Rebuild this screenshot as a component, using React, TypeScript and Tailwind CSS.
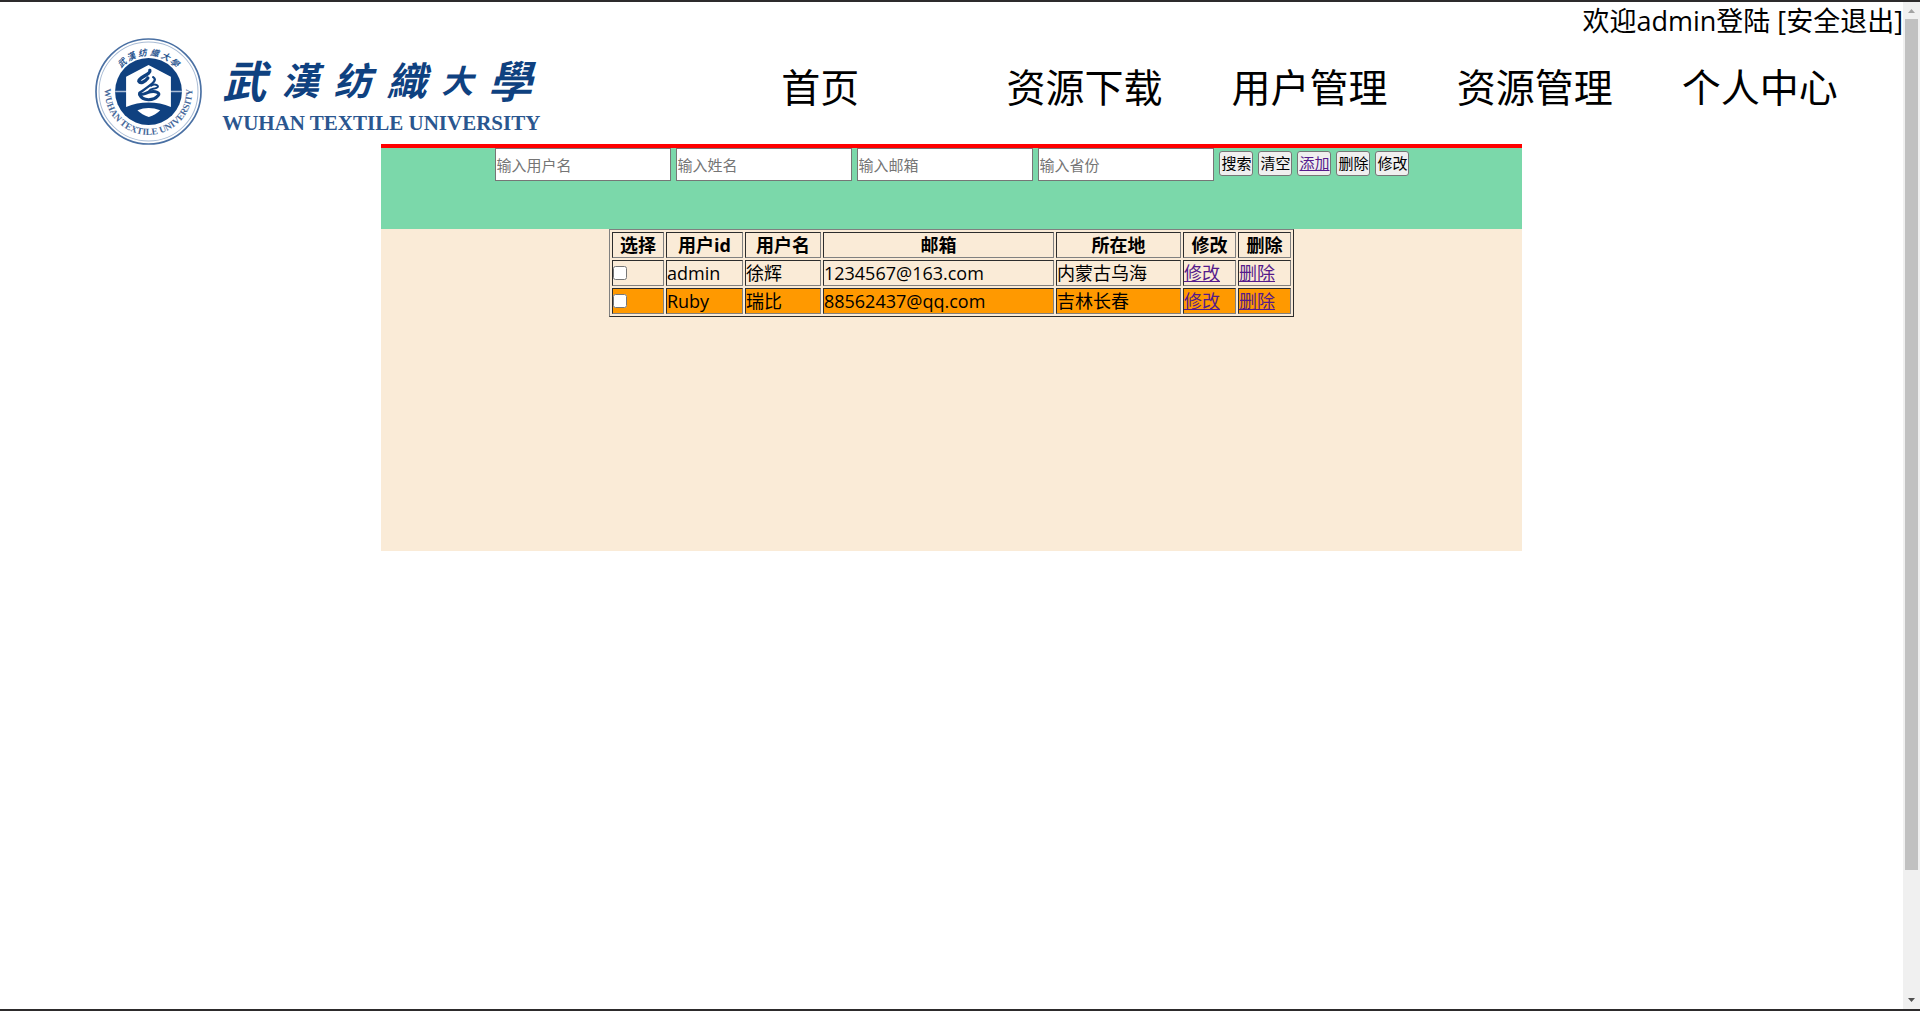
import React from "react";

const navItems = ["首页", "资源下载", "用户管理", "资源管理", "个人中心"];

const filters = ["输入用户名", "输入姓名", "输入邮箱", "输入省份"];

const users = [
  { id: "admin", name: "徐辉", email: "1234567@163.com", place: "内蒙古乌海" },
  { id: "Ruby", name: "瑞比", email: "88562437@qq.com", place: "吉林长春" },
];

const columns = [
  { label: "选择", width: "w-[52px]" },
  { label: "用户id", width: "w-[77px]" },
  { label: "用户名", width: "w-[76px]" },
  { label: "邮箱", width: "w-auto" },
  { label: "所在地", width: "w-[125px]" },
  { label: "修改", width: "w-[53px]" },
  { label: "删除", width: "w-[53px]" },
];

const cell =
  "h-[26px] p-0 border border-t-[#2c2c2c] border-l-[#2c2c2c] border-b-[#808080] border-r-[#808080] leading-none";

const buttonStyle =
  "mt-[3px] h-[25px] w-[34px] rounded-[3px] border border-[#767676] bg-[#efefef] text-center text-[15px] leading-none whitespace-nowrap";

const sealChars = [
  { ch: "武", a: -43 },
  { ch: "漢", a: -27 },
  { ch: "纺", a: -9 },
  { ch: "織", a: 9 },
  { ch: "大", a: 26 },
  { ch: "學", a: 42 },
];

const logoChars = [
  { ch: "武", size: "text-[44px]" },
  { ch: "漢", size: "text-[38px]" },
  { ch: "纺", size: "text-[38px]" },
  { ch: "織", size: "text-[40px]" },
  { ch: "大", size: "text-[32px]" },
  { ch: "學", size: "text-[44px]" },
];

function Seal() {
  return (
    <svg viewBox="0 0 320 320" className="size-[107px] shrink-0" aria-hidden="true">
      <defs>
        <path id="seal-arc" d="M31 136 A131 131 0 1 0 289 136" />
      </defs>
      <circle cx="160" cy="160" r="157" fill="none" stroke="#4a70a3" strokeWidth="5" />
      <circle cx="160" cy="160" r="148" fill="none" stroke="#a9bcd5" strokeWidth="3" />
      <circle cx="160" cy="160" r="100" fill="#0f4180" />
      <path d="M60 160H260" stroke="#a9bcd5" strokeWidth="5" />
      <path
        d="M160 81 L227 116 V206 Q195 193 160 193 Q125 193 93 206 V116 Z"
        fill="#fff"
      />
      <path d="M127 216 Q160 203 195 216 Q182 230 161 236 Q140 230 127 216 Z" fill="#fff" />
      <g
        fill="none"
        stroke="#0f4180"
        strokeLinecap="round"
        strokeLinejoin="round"
      >
        <path d="M164 97 C168 108 131 118 131 129 C136 138 150 131 158 120" strokeWidth="10" />
        <path d="M174 117 C190 127 165 142 133 164" strokeWidth="7" />
        <path d="M168 143 C180 134 196 144 184 149 C174 153 166 150 162 158" strokeWidth="6" />
        <path d="M133 167 C142 173 152 163 166 161 C181 158 197 164 189 172 C176 188 143 190 133 169" strokeWidth="9" />
      </g>
      {sealChars.map(({ ch, a }) => (
        <text
          key={ch}
          x="160"
          y="53"
          transform={`rotate(${a} 160 160)`}
          textAnchor="middle"
          fontSize="26"
          fontWeight="700"
          fontStyle="italic"
          fill="#2a568f"
          fontFamily='"Noto Sans CJK TC", sans-serif'
        >
          {ch}
        </text>
      ))}
      <text
        fontSize="28"
        fontWeight="700"
        fill="#47699b"
        fontFamily='"Liberation Serif", serif'
        textAnchor="middle"
      >
        <textPath href="#seal-arc" startOffset="50%">
          WUHAN TEXTILE UNIVERSITY
        </textPath>
      </text>
    </svg>
  );
}

function Logo() {
  return (
    <a href="#" className="flex items-start gap-[20px]">
      <Seal />
      <span className="flex w-[310px] flex-col pt-[10px] text-[#0f4180]">
        <span
          lang="zh-Hant"
          className="flex h-[62px] items-center justify-between font-['Noto_Sans_CJK_TC',sans-serif] leading-none font-bold italic"
        >
          {logoChars.map(({ ch, size }) => (
            <span key={ch} className={size}>{ch}</span>
          ))}
        </span>
        <span className="font-['Liberation_Serif',serif] text-[21px] leading-[26px] font-bold whitespace-nowrap text-[#2a568f]">
          WUHAN TEXTILE UNIVERSITY
        </span>
      </span>
    </a>
  );
}

function ScrollBar() {
  return (
    <div className="flex w-[17px] shrink-0 flex-col items-center bg-[#f0f0f0]" aria-hidden="true">
      <svg viewBox="0 0 17 17" className="size-[17px]">
        <path d="M5 11 L8.5 7 L12 11 Z" fill="#a3a3a3" />
      </svg>
      <div className="grid w-[13px] flex-1 grid-rows-[7fr_1fr]">
        <div className="bg-[#c1c1c1]" />
      </div>
      <svg viewBox="0 0 17 17" className="size-[17px]">
        <path d="M5 6 L8.5 10 L12 6 Z" fill="#505050" />
      </svg>
    </div>
  );
}

export default function App() {
  return (
    <div className="flex h-screen flex-col border-y-2 border-[#2d2b2c] bg-white font-['Open_Sans','Noto_Sans_CJK_SC',sans-serif] text-black">
      <div className="flex min-h-0 flex-1">
        <div className="min-w-0 flex-1">
          <div className="flex h-[36px] items-center justify-end text-[27px] leading-none">
            <span>
              欢迎admin登陆 [<a href="#">安全退出</a>]
            </span>
          </div>
          <header className="flex h-[106px] items-start">
            <div className="w-[41%] pl-[5%]">
              <Logo />
            </div>
            <nav className="grid flex-1 grid-cols-5 gap-x-1 pt-[29px] pl-px text-[39px] leading-[40px]">
              {navItems.map((item) => (
                <a key={item} href="#" className="whitespace-nowrap">
                  {item}
                </a>
              ))}
            </nav>
          </header>
          <main className="mx-auto w-3/5 border-t-4 border-[#ff0000]">
            <form className="flex h-[81px] items-start justify-center gap-[5px] bg-[#7bd8aa] pl-[2px]">
              {filters.map((label) => (
                <input
                  key={label}
                  type="text"
                  aria-label={label}
                  placeholder={label}
                  className="h-[33px] w-[176px] border border-[#767676] bg-white p-0 text-[15px] leading-none placeholder:text-[#757575]"
                />
              ))}
              <button type="button" className={buttonStyle}>搜索</button>
              <button type="button" className={buttonStyle}>清空</button>
              <button type="button" className={`${buttonStyle} text-[#551a8b] underline`}>添加</button>
              <button type="button" className={buttonStyle}>删除</button>
              <button type="button" className={buttonStyle}>修改</button>
            </form>
            <div className="min-h-[322px] bg-[#faebd7]">
              <table className="mx-auto w-3/5 table-fixed border-separate border-spacing-[2px] border border-t-[#808080] border-r-[#2c2c2c] border-b-[#2c2c2c] border-l-[#808080] text-[18px]">
                <thead>
                  <tr>
                    {columns.map((c) => (
                      <th key={c.label} scope="col" className={`${cell} ${c.width} text-center font-bold`}>
                        {c.label}
                      </th>
                    ))}
                  </tr>
                </thead>
                <tbody>
                  {users.map((u) => (
                    <tr key={u.id} className="even:bg-[#ff9900]">
                      <td className={cell}>
                        <input type="checkbox" aria-label={`选择 ${u.id}`} className="block size-[14px]" />
                      </td>
                      <td className={cell}>{u.id}</td>
                      <td className={cell}>{u.name}</td>
                      <td className={cell}>{u.email}</td>
                      <td className={cell}>{u.place}</td>
                      <td className={cell}>
                        <a href="#" className="text-[#551a8b] underline">修改</a>
                      </td>
                      <td className={cell}>
                        <a href="#" className="text-[#551a8b] underline">删除</a>
                      </td>
                    </tr>
                  ))}
                </tbody>
              </table>
            </div>
          </main>
        </div>
        <ScrollBar />
      </div>
    </div>
  );
}
